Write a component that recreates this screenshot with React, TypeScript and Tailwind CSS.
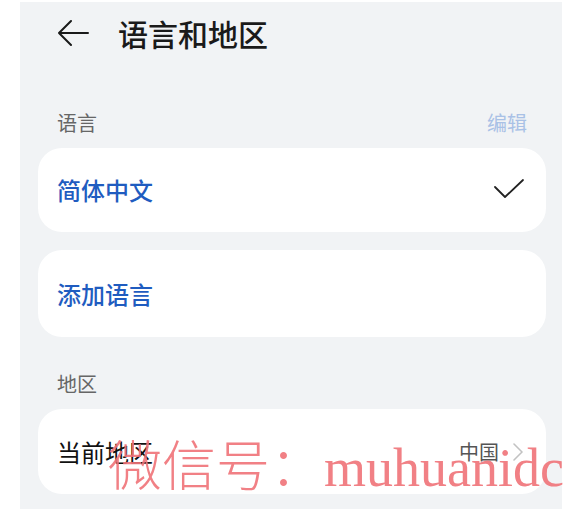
export default function App() {
  return (
    <div
      className="relative w-[579px] h-[509px] overflow-hidden bg-white"
      style={{ fontFamily: '"Noto Sans CJK SC", "Noto Sans", sans-serif' }}
    >
      <div className="ml-[20px] mt-[2px] w-[542px] h-[507px] bg-[#f1f3f5] pl-[18px] pr-[16px]">
        {/* Header */}
        <div className="h-[62px] flex items-center pl-[20px]">
          <svg className="w-[32px] h-[28px] text-[#1a1a1a]" viewBox="0 0 32 28" fill="none" stroke="currentColor" strokeWidth={2} strokeLinecap="round" strokeLinejoin="round">
            <path d="M1 14h29M13 2L1 14l12 12" />
          </svg>
          <h1 className="ml-[28px] text-[30px] leading-none font-medium text-[#1a1a1a]">语言和地区</h1>
        </div>

        {/* Language section */}
        <div className="h-[84px] flex items-end justify-between pl-[19px] pr-[19px] pb-[15px]">
          <span className="text-[20px] leading-[20px] text-[#666666]">语言</span>
          <span className="text-[20px] leading-[20px] text-[#a9c1e6]">编辑</span>
        </div>
        <div className="h-[84px] rounded-[24px] bg-white flex items-center justify-between pl-[19px] pr-[22px]">
          <span className="text-[24px] font-medium text-[#1f5cc0]">简体中文</span>
          <svg className="w-[30px] h-[22px] text-[#222222]" viewBox="0 0 30 22" fill="none" stroke="currentColor" strokeWidth={1.8} strokeLinecap="round" strokeLinejoin="round">
            <path d="M1 8l10 10L29 1" />
          </svg>
        </div>
        <div className="mt-[18px] h-[87px] rounded-[24px] bg-white flex items-center pl-[19px]">
          <span className="text-[24px] font-medium text-[#1f5cc0]">添加语言</span>
        </div>

        {/* Region section */}
        <div className="h-[72px] flex items-end px-[19px] pb-[15px]">
          <span className="text-[20px] leading-[20px] text-[#666666]">地区</span>
        </div>
        <div className="h-[85px] rounded-[24px] bg-white flex items-center justify-between pl-[19px] pr-[23px]">
          <span className="text-[24px] text-[#111111]">当前地区</span>
          <div className="flex items-center gap-[14px]">
            <span className="text-[20px] text-[#555555]">中国</span>
            <svg className="w-[10px] h-[18px] text-[#c2c2c2]" viewBox="0 0 10 18" fill="none" stroke="currentColor" strokeWidth={1.6} strokeLinecap="round" strokeLinejoin="round">
              <path d="M1 1l8 8-8 8" />
            </svg>
          </div>
        </div>
      </div>

      {/* Watermark */}
      <div className="absolute left-[108px] top-[436px] whitespace-nowrap text-[54px] leading-none text-[#f07378] opacity-90 pointer-events-none">
        <span className="font-light">微信号：</span>
        <span style={{ fontFamily: '"Liberation Serif", serif' }}>muhuanidc</span>
      </div>
    </div>
  );
}
